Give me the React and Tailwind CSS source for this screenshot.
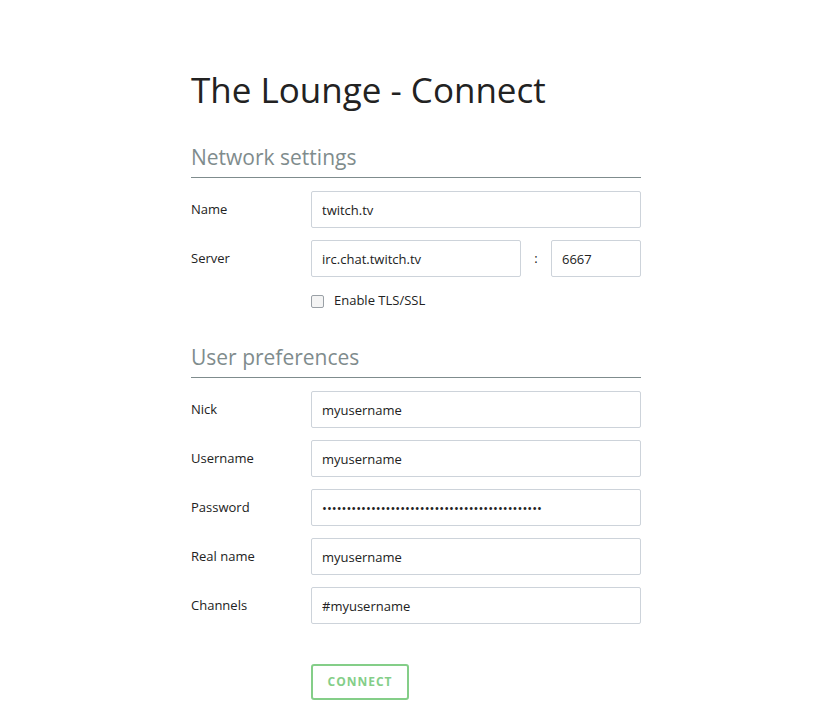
import React from "react";

const font = { fontFamily: '"Open Sans", "Noto Sans", sans-serif' };

function Row({ label, children }) {
  return (
    <div className="flex items-center h-[37px] mb-[12px]">
      <div className="w-[120px] text-[13px] text-[#222]">{label}</div>
      <div className="flex-1 flex items-center">{children}</div>
    </div>
  );
}

function Input({ value, className = "flex-1", type = "text" }) {
  return (
    <input
      type={type}
      defaultValue={value}
      readOnly
      className={`${className} h-[37px] border border-[#cdd3da] rounded-[2px] px-[10px] text-[13px] text-[#222] outline-none bg-white`}
      style={font}
    />
  );
}

export default function App() {
  return (
    <div className="min-h-[724px] bg-white" style={font}>
      <div className="w-[450px] ml-[191px] pt-[66px]">
        <h1 className="text-[35px] leading-[48px] text-[#222] font-normal m-0">The Lounge - Connect</h1>
        <h2 className="mt-[28px] text-[21px] leading-[30px] text-[#7f8c8d] font-normal border-b border-[#7f8c8d] pb-[5px] mb-[13px]">
          Network settings
        </h2>
        <Row label="Name"><Input value="twitch.tv" /></Row>
        <Row label="Server">
          <Input value="irc.chat.twitch.tv" className="w-[210px]" />
          <span className="w-[30px] text-center text-[13px] text-[#222]">:</span>
          <Input value="6667" className="w-[90px]" />
        </Row>
        <div className="flex items-center pl-[120px] h-[24px] mt-[1px]">
          <span className="w-[13px] h-[13px] border border-[#9aa0a6] rounded-[2px] bg-[#f4f4f4] mr-[10px]" />
          <span className="text-[13px] text-[#222]">Enable TLS/SSL</span>
        </div>
        <h2 className="mt-[29px] text-[21px] leading-[30px] text-[#7f8c8d] font-normal border-b border-[#7f8c8d] pb-[5px] mb-[13px]">
          User preferences
        </h2>
        <Row label="Nick"><Input value="myusername" /></Row>
        <Row label="Username"><Input value="myusername" /></Row>
        <Row label="Password"><Input value="myusernamemyusernamemyusernamemyusernamemyuse" type="password" /></Row>
        <Row label="Real name"><Input value="myusername" /></Row>
        <Row label="Channels"><Input value="#myusername" /></Row>
        <div className="pl-[120px] pt-[28px]">
          <button className="w-[98px] h-[36px] border-2 border-[#84ce88] rounded-[3px] text-[#84ce88] text-[12px] font-bold tracking-[1px] uppercase bg-white" style={font}>
            Connect
          </button>
        </div>
      </div>
    </div>
  );
}
